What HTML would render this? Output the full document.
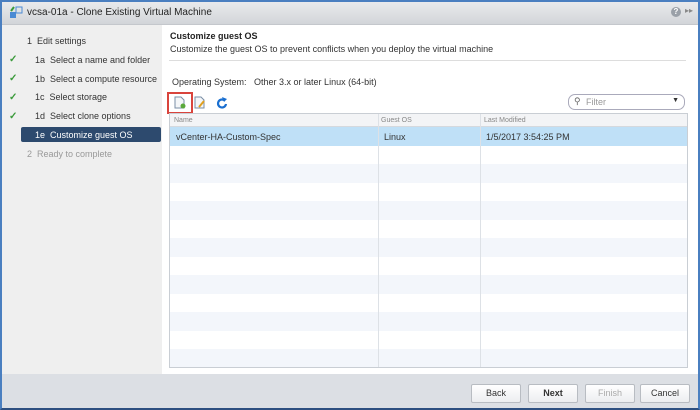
<!DOCTYPE html><html><head><style>
body{margin:0;width:700px;height:410px;overflow:hidden;font-family:"Liberation Sans",sans-serif;font-size:9px;color:#333}
.win{position:absolute;left:0;top:0;width:696px;height:406px;border:2px solid #4a7fc0;border-bottom-color:#2d4f80;background:#fff}
.title{position:absolute;left:0;top:0;width:696px;height:22px;background:linear-gradient(#e9eaec,#d2d5d9);border-bottom:1px solid #c4c7cc}
.title span{position:absolute;left:25px;top:5px;font-size:10px;color:#222}
.left{position:absolute;left:0;top:23px;width:160px;height:349px;background:#efefef}
.step{position:absolute;font-size:9px;color:#333}
.ck{position:absolute;left:7px;color:#3a9a3a;font-size:10px;font-weight:bold}
.sel{position:absolute;left:19px;top:102px;width:140px;height:15px;background:#2d4a6e;border-radius:2px}
.foot{position:absolute;left:0;top:372px;width:696px;height:34px;background:#dcdfe4}
.btn{position:absolute;top:10px;height:17px;border:1px solid #b8bcc2;background:linear-gradient(#fff,#eceef0);border-radius:2px;font-size:9px;text-align:center;line-height:17px;color:#333}
.tbl{position:absolute;left:167px;top:111px;width:517px;height:253px;border:1px solid #c9ced4;overflow:hidden}
.row{position:absolute;left:0;width:517px;height:18.6px}
</style></head><body><div class="win">
<div class="title"><svg style="position:absolute;left:7px;top:4px" width="14" height="14"><rect x="1" y="6" width="6" height="6" fill="#4a8ad4"/><rect x="7" y="1" width="6" height="6" fill="none" stroke="#4a8ad4"/><path d="M2 5 L5 1" stroke="#3a9a3a" stroke-width="2"/></svg><span>vcsa-01a - Clone Existing Virtual Machine</span>
<div style="position:absolute;left:669px;top:5px;width:10px;height:10px;border-radius:50%;background:#9aa0a8;color:#fff;font-size:8px;text-align:center;line-height:10px;font-weight:bold">?</div>
<span style="left:683px;top:4px;color:#888;font-size:8px">▸▸</span></div>
<div class="left">
<div class="step" style="left:25px;top:11px">1&nbsp; Edit settings</div>
<div class="ck" style="top:29px">✓</div><div class="step" style="left:33px;top:30px">1a&nbsp; Select a name and folder</div>
<div class="ck" style="top:48px">✓</div><div class="step" style="left:33px;top:49px">1b&nbsp; Select a compute resource</div>
<div class="ck" style="top:67px">✓</div><div class="step" style="left:33px;top:67px">1c&nbsp; Select storage</div>
<div class="ck" style="top:86px">✓</div><div class="step" style="left:33px;top:86px">1d&nbsp; Select clone options</div>
<div class="sel"></div><div class="step" style="left:33px;top:105px;color:#fff">1e&nbsp; Customize guest OS</div>
<div class="step" style="left:25px;top:124px;color:#999">2&nbsp; Ready to complete</div>
</div>
<div style="position:absolute;left:168px;top:29px;font-size:9px;font-weight:bold;color:#222">Customize guest OS</div>
<div style="position:absolute;left:168px;top:42px;font-size:9px">Customize the guest OS to prevent conflicts when you deploy the virtual machine</div>
<div style="position:absolute;left:167px;top:58px;width:517px;height:1px;background:#ddd"></div>
<div style="position:absolute;left:170px;top:75px;font-size:9px">Operating System: &nbsp; Other 3.x or later Linux (64-bit)</div>
<div style="position:absolute;left:165px;top:90px;width:26px;height:22px;border:2px solid #d9443c;box-sizing:border-box"></div>
<svg style="position:absolute;left:172px;top:94px" width="60" height="14"><path d="M1 1h6l3 3v8H1z" fill="#f4f6f8" stroke="#7a8ea6"/><circle cx="9" cy="10" r="2.5" fill="#5aa83a"/><path d="M21 1h6l3 3v8h-9z" fill="#f4f6f8" stroke="#7a8ea6"/><path d="M25 11l5-6" stroke="#e0a020" stroke-width="2"/><path d="M50 4a4 4 0 1 0 2 4" fill="none" stroke="#1a6fd0" stroke-width="2.2"/><path d="M48 1l5 2-3 3z" fill="#1a6fd0"/></svg>
<div style="position:absolute;left:566px;top:92px;width:115px;height:14px;border:1px solid #aab;border-radius:7px;background:#fff"><span style="position:absolute;left:5px;top:1px;color:#666">⚲</span><span style="position:absolute;left:17px;top:2px;color:#999">Filter</span><span style="position:absolute;right:5px;top:2px;font-size:7px">▼</span></div>
<div class="tbl">
<div class="row" style="top:0;height:12px;background:#f3f4f6;border-bottom:1px solid #d5d9de"></div>
<div style="position:absolute;left:4px;top:3px;font-size:7px;color:#888">Name</div>
<div style="position:absolute;left:211px;top:3px;font-size:7px;color:#888">Guest OS</div>
<div style="position:absolute;left:314px;top:3px;font-size:7px;color:#888">Last Modified</div>
<div class="row" style="top:13px;background:#bfe0f7"></div>
<div class="row" style="top:50px;background:#f3f6fb"></div>
<div class="row" style="top:87px;background:#f3f6fb"></div>
<div class="row" style="top:124px;background:#f3f6fb"></div>
<div class="row" style="top:161px;background:#f3f6fb"></div>
<div class="row" style="top:198px;background:#f3f6fb"></div>
<div class="row" style="top:235px;background:#f3f6fb"></div>
<div style="position:absolute;left:208px;top:0;width:1px;height:255px;background:#dde1e6"></div>
<div style="position:absolute;left:310px;top:0;width:1px;height:255px;background:#dde1e6"></div>
<div style="position:absolute;left:6px;top:18px">vCenter-HA-Custom-Spec</div>
<div style="position:absolute;left:214px;top:18px">Linux</div>
<div style="position:absolute;left:316px;top:18px">1/5/2017 3:54:25 PM</div>
</div>
<div class="foot">
<div class="btn" style="left:469px;width:48px">Back</div>
<div class="btn" style="left:526px;width:48px;font-weight:bold">Next</div>
<div class="btn" style="left:583px;width:48px;color:#aaa">Finish</div>
<div class="btn" style="left:638px;width:48px">Cancel</div>
</div>
</div></body></html>
